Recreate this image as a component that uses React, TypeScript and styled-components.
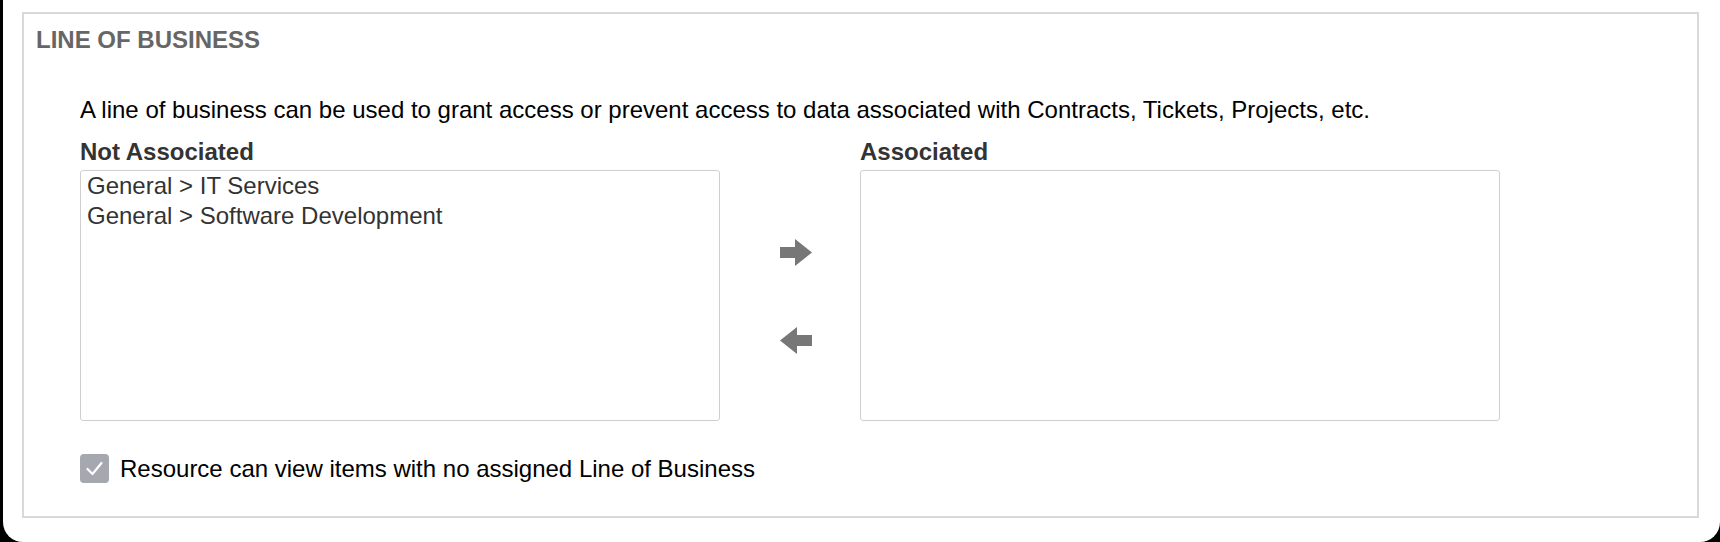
import React from "react";
import styled, { createGlobalStyle } from "styled-components";

const GlobalStyle = createGlobalStyle`
  html, body {
    margin: 0;
    padding: 0;
    background: #000;
  }
  body {
    font-family: "Liberation Sans", Arial, Helvetica, sans-serif;
  }
  * { box-sizing: border-box; }
`;

const Window = styled.div`
  margin-left: 3px;
  height: 542px;
  background: #fff;
  border-radius: 0 0 20px 20px;
  padding: 12px 21px 24px 19px;
  overflow: hidden;
`;

const Fieldset = styled.section`
  height: 100%;
  border: 2px solid #d9d9d9;
  padding: 12px 12px 0 12px;
`;

const Title = styled.h2`
  margin: 0;
  font-size: 24px;
  line-height: 28px;
  font-weight: bold;
  color: #666;
`;

const Body = styled.div`
  padding-left: 44px;
  margin-top: 42px;
`;

const Description = styled.p`
  margin: 0;
  font-size: 24px;
  line-height: 28px;
  color: #000;
`;

const Pickers = styled.div`
  display: flex;
  margin-top: 14px;
`;

const ListColumn = styled.div`
  display: flex;
  flex-direction: column;
  gap: 4px;
  width: 640px;
`;

const ListLabel = styled.div`
  font-size: 24px;
  line-height: 28px;
  font-weight: bold;
  color: #333;
`;

const ListBox = styled.ul`
  margin: 0;
  padding: 0;
  list-style: none;
  height: 251px;
  border: 1px solid #cfcfcf;
  border-radius: 3px;
  overflow: hidden;
`;

const ListItem = styled.li`
  padding: 1px 6px;
  font-size: 24px;
  line-height: 27.6px;
  color: #333;
  white-space: nowrap;
`;

const ArrowColumn = styled.div`
  width: 140px;
  padding: 33px 0 0 12px;
  display: flex;
  flex-direction: column;
  align-items: center;
  justify-content: center;
  gap: 61px;
`;

const ArrowButton = styled.button`
  border: 0;
  padding: 0;
  background: none;
  width: 32px;
  height: 27px;
  display: block;
  cursor: pointer;
`;

const CheckRow = styled.label`
  display: flex;
  align-items: center;
  gap: 11px;
  margin-top: 33px;
  height: 29px;
`;

const CheckBox = styled.span`
  width: 29px;
  height: 29px;
  border-radius: 4px;
  background: #a5a8ae;
  display: flex;
  align-items: center;
  justify-content: center;
`;

const CheckLabel = styled.span`
  font-size: 24px;
  line-height: 28px;
  color: #000;
`;

const Arrow = ({ dir }: { dir: "right" | "left" }) => (
  <svg width="32" height="27" viewBox="0 0 32 27">
    <g transform={dir === "left" ? "translate(32,0) scale(-1,1)" : undefined}>
      <polygon points="0,8 15,8 15,0 32,13.5 15,27 15,19 0,19" fill="#777" />
    </g>
  </svg>
);

const notAssociated = ["General > IT Services", "General > Software Development"];

export default function App() {
  return (
    <>
      <GlobalStyle />
      <Window>
        <Fieldset>
          <Title>LINE OF BUSINESS</Title>
          <Body>
            <Description>
              A line of business can be used to grant access or prevent access to data associated with Contracts, Tickets, Projects, etc.
            </Description>
            <Pickers>
              <ListColumn>
                <ListLabel>Not Associated</ListLabel>
                <ListBox>
                  {notAssociated.map((t) => (
                    <ListItem key={t}>{t}</ListItem>
                  ))}
                </ListBox>
              </ListColumn>
              <ArrowColumn>
                <ArrowButton aria-label="Associate">
                  <Arrow dir="right" />
                </ArrowButton>
                <ArrowButton aria-label="Disassociate">
                  <Arrow dir="left" />
                </ArrowButton>
              </ArrowColumn>
              <ListColumn>
                <ListLabel>Associated</ListLabel>
                <ListBox />
              </ListColumn>
            </Pickers>
            <CheckRow>
              <CheckBox>
                <svg width="19" height="17" viewBox="0 0 19 17">
                  <polyline points="2.5,9 7.5,14 16.5,3" fill="none" stroke="#fff" strokeWidth="2.2" strokeLinecap="round" strokeLinejoin="round" />
                </svg>
              </CheckBox>
              <CheckLabel>Resource can view items with no assigned Line of Business</CheckLabel>
            </CheckRow>
          </Body>
        </Fieldset>
      </Window>
    </>
  );
}
